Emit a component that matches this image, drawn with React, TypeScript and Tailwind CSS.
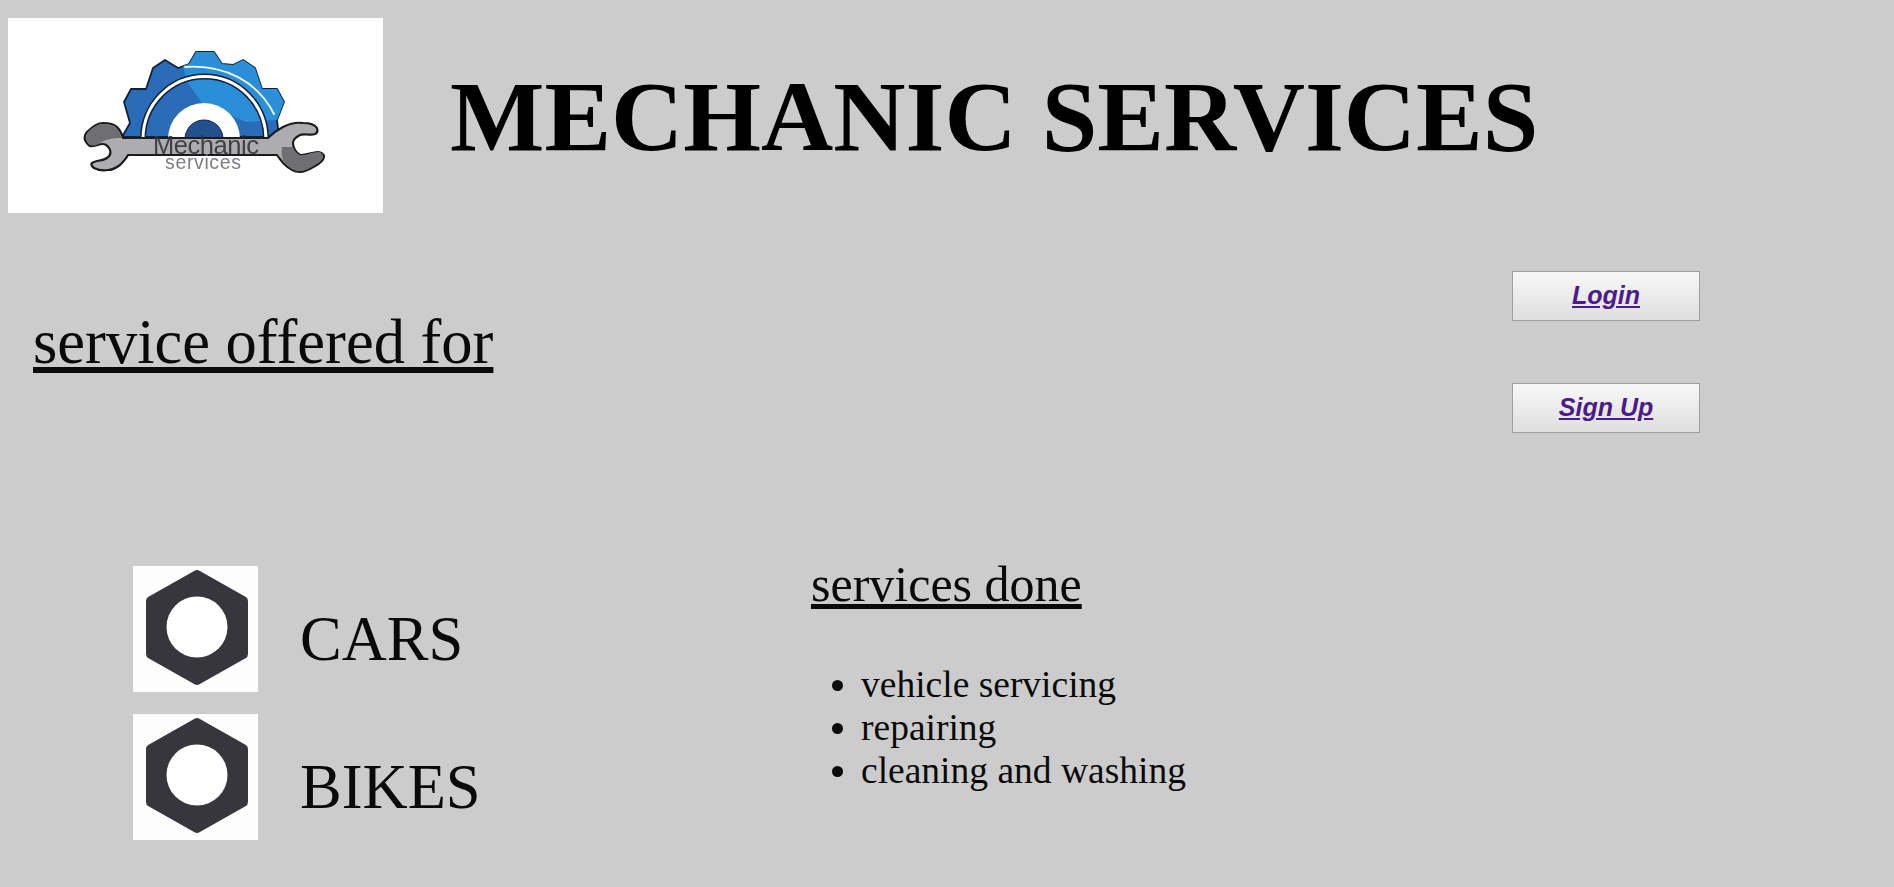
import React from 'react';

function Logo() {
  return (
    <svg viewBox="0 0 375 195" className="w-[375px] h-[195px] shrink-0 bg-white blur-[0.5px]">
      <g transform="translate(-8 -18)">
        {/* gear */}
        <path d="M122 137 L130 123 L124 102 L131 89 L146 89 L153 68 L165 60 L178 68 L189 64 L196 52 L214 52 L222 64 L233 65 L243 60 L255 68 L262 89 L277 89 L284 102 L277 120 L279 137 Z" fill="#2b6cb8" stroke="#10213a" strokeWidth="1.8" strokeLinejoin="round" />
        <path d="M183 66 L189 64 L196 52 L214 52 L222 64 L233 65 L243 60 L255 68 L262 89 L277 89 L284 102 L277 120 L246 122 L202 103 L187 82 Z" fill="#2a8fd6" />
        <path d="M185 67 C225 64 258 82 274 114" fill="none" stroke="#f4f9fd" strokeWidth="1.8" strokeLinecap="round" />
        <path d="M143 139 A61 62 0 0 1 266 139" fill="none" stroke="#10213a" strokeWidth="6" />
        <path d="M143 139 A61 62 0 0 1 266 139" fill="none" stroke="#ffffff" strokeWidth="3" />
        <path d="M168 139 A36 36 0 0 1 240 139 Z" fill="#ffffff" />
        <path d="M185 139 A19 19 0 0 1 223 139 Z" fill="#23518f" stroke="#10213a" strokeWidth="1" />
        {/* wrench */}
        <path d="M85 140 C84 136 85 134 87 132 C92 127 97 123 103 123 C110 123 114 124 117 127 C120 130 122 134 123 138 L268 138 C272 134 277 130 283 127 C289 124 296 122 303 123 C309 123 315 125 317 128 C318 131 317 133 315 134 C310 136 304 133 300 135 C296 137 293 140 293 143 C293 148 296 153 300 155 C305 156 312 152 318 152 C321 152 324 154 324 157 C323 161 319 164 315 166 C310 169 305 172 300 172 C293 172 288 168 283 163 C281 160 279 158 277 155 L128 155 C126 159 123 162 120 165 C116 168 112 170 108 170 C103 171 98 170 94 168 C91 166 91 164 92 163 C96 160 103 161 107 158 C110 156 111 153 110 150 C109 147 106 144 103 144 C98 144 94 147 90 146 C88 145 86 142 85 140 Z" fill="#adadaf" stroke="#1c1c1e" strokeWidth="2.2" strokeLinejoin="round" />
        {/* shading on the heads */}
        <path d="M86 139 C86 135 87 133 88 132 C92 128 97 124 103 124 C110 124 113 125 116 128 C119 131 121 134 122 138 C112 138 104 140 100 143 C96 146 93 146 90 145 C88 144 87 141 86 139 Z" fill="#6f6f72" />
        <path d="M282 147 L293 147 C294 150 297 154 300 155 C305 156 312 152 318 152 C321 152 323 154 323 157 C322 160 319 163 315 165 C310 168 305 171 300 171 C293 171 288 167 284 162 C282 158 281 152 282 147 Z" fill="#6f6f72" />
        <text x="153" y="154" fontFamily="Liberation Sans, sans-serif" fontSize="25.5" fill="#33333b" fillOpacity="0.9" textLength="106">Mechanic</text>
        <text x="165" y="169" fontFamily="Liberation Sans, sans-serif" fontSize="19.5" fill="#7d7d82" textLength="76">services</text>
      </g>
    </svg>
  );
}

function NutIcon() {
  return (
    <svg viewBox="0 0 125 126" className="w-[125px] h-[126px] block bg-[#fdfdfd] blur-[0.3px]">
      <path d="M64 9 L110 35 L110 88 L64 114 L18 88 L18 35 Z" fill="#36363c" stroke="#36363c" strokeWidth="10" strokeLinejoin="round" />
      <circle cx="64" cy="61" r="30.5" fill="#ffffff" />
    </svg>
  );
}

function NavButton({ label }: { label: string }) {
  return (
    <a href="#" className="flex items-center justify-center w-[188px] h-[50px] border border-[#a0a0a0] bg-gradient-to-b from-[#f8f8f8] to-[#dedede] text-[25px] font-bold italic underline text-[#4b1a8b] font-['Liberation_Sans',sans-serif]">
      {label}
    </a>
  );
}

export default function App() {
  return (
    <div className="h-[887px] overflow-hidden bg-[#cccccc] text-[#0a0a0a] font-['Liberation_Serif',serif]">
      {/* Header */}
      <div className="flex items-center pl-2 pt-[18px]">
        <Logo />
        <h1 className="ml-[67px] mt-[2px] text-[100px] leading-none font-bold text-black">MECHANIC SERVICES</h1>
      </div>

      {/* Login row */}
      <div className="flex justify-between pl-[33px] pr-[194px] pt-[58px]">
        <h2 className="mt-[35px] text-[62.5px] leading-[72px] underline">service offered for</h2>
        <div className="flex flex-col gap-[62px]">
          <NavButton label="Login" />
          <NavButton label="Sign Up" />
        </div>
      </div>

      {/* Bottom */}
      <div className="flex pl-[133px] pt-[133px]">
        <div className="w-[678px] flex flex-col gap-[22px]">
          <div className="flex items-end gap-[42px]">
            <NutIcon />
            <span className="text-[62.5px] leading-[69px] mb-[18px]">CARS</span>
          </div>
          <div className="flex items-end gap-[42px]">
            <NutIcon />
            <span className="text-[62.5px] leading-[69px] mb-[18px]">BIKES</span>
          </div>
        </div>
        <div className="-mt-[9px]">
          <h3 className="text-[50px] leading-[55px] underline">services done</h3>
          <ul className="list-disc mt-[51px] pl-[50px] text-[37.5px] leading-[43px]">
            <li>vehicle servicing</li>
            <li>repairing</li>
            <li>cleaning and washing</li>
          </ul>
        </div>
      </div>
    </div>
  );
}
